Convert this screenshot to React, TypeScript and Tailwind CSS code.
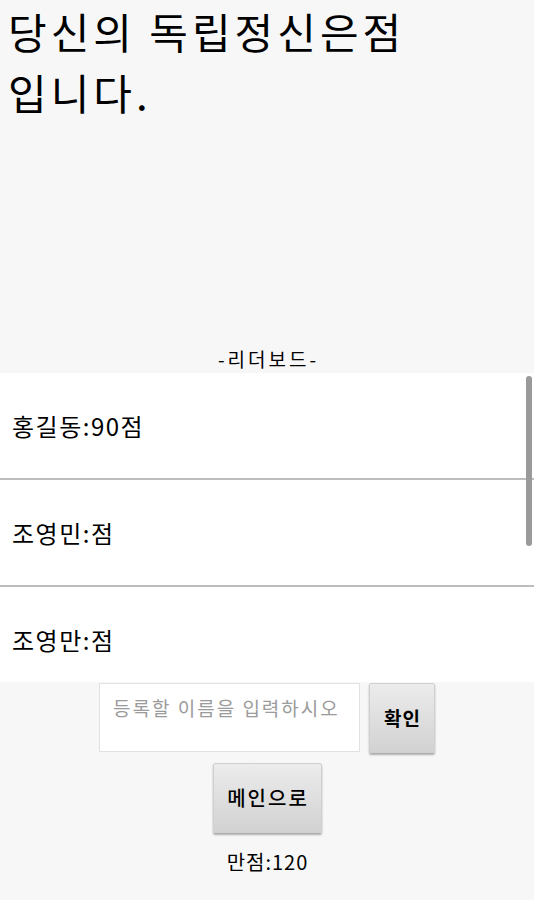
import React from "react";

const font = { fontFamily: '"Noto Sans CJK KR", "Noto Sans", sans-serif' };

export default function App() {
  const rows = ["홍길동:90점", "조영민:점", "조영만:점"];
  return (
    <div className="w-[534px] h-[900px] bg-[#f7f7f7] text-black overflow-hidden flex flex-col" style={font}>
      <div className="h-[345px] pl-[8px]">
        <div className="text-[42px] leading-[61px] tracking-[4px]">
          <div>당신의 독립정신은점</div>
          <div>입니다.</div>
        </div>
      </div>
      <div className="h-[28px] flex items-center justify-center text-[19px] leading-[28px] tracking-[3px] pl-[3px]">-리더보드-</div>
      <div className="relative h-[309px] bg-white overflow-hidden">
        {rows.map((r, i) => (
          <div key={i} className="h-[107px] flex items-center pl-[12px] text-[24px] tracking-[1.5px] border-b-2 border-[#bdbdbd]">
            {r}
          </div>
        ))}
        <div className="absolute right-[2px] top-[3px] w-[6px] h-[170px] rounded-full bg-[#9a9a9a]" />
      </div>
      <div className="flex justify-center gap-[9px] pt-[1px]">
        <div className="w-[261px] h-[69px] bg-white border border-[#e2e2e2] pl-[13px] pt-[10px] text-[19px] tracking-[2px] text-[#9b9b9b]">
          등록할 이름을 입력하시오
        </div>
        <div className="w-[66px] h-[70px] flex items-center justify-center text-[19px] font-bold tracking-[1px] pl-[1px] bg-gradient-to-b from-[#ececec] to-[#d2d2d2] border border-[#cfcfcf] shadow-[0_2px_2px_rgba(0,0,0,0.3)] rounded-[2px]">
          확인
        </div>
      </div>
      <div className="flex justify-center pt-[10px]">
        <div className="w-[109px] h-[70px] flex items-center justify-center text-[20px] font-medium tracking-[2px] pl-[2px] bg-gradient-to-b from-[#ececec] to-[#d2d2d2] border border-[#cfcfcf] shadow-[0_2px_2px_rgba(0,0,0,0.3)] rounded-[2px]">
          메인으로
        </div>
      </div>
      <div className="flex justify-center pt-[14px] text-[20px] tracking-[1px] pl-[1px]">만점:120</div>
    </div>
  );
}
